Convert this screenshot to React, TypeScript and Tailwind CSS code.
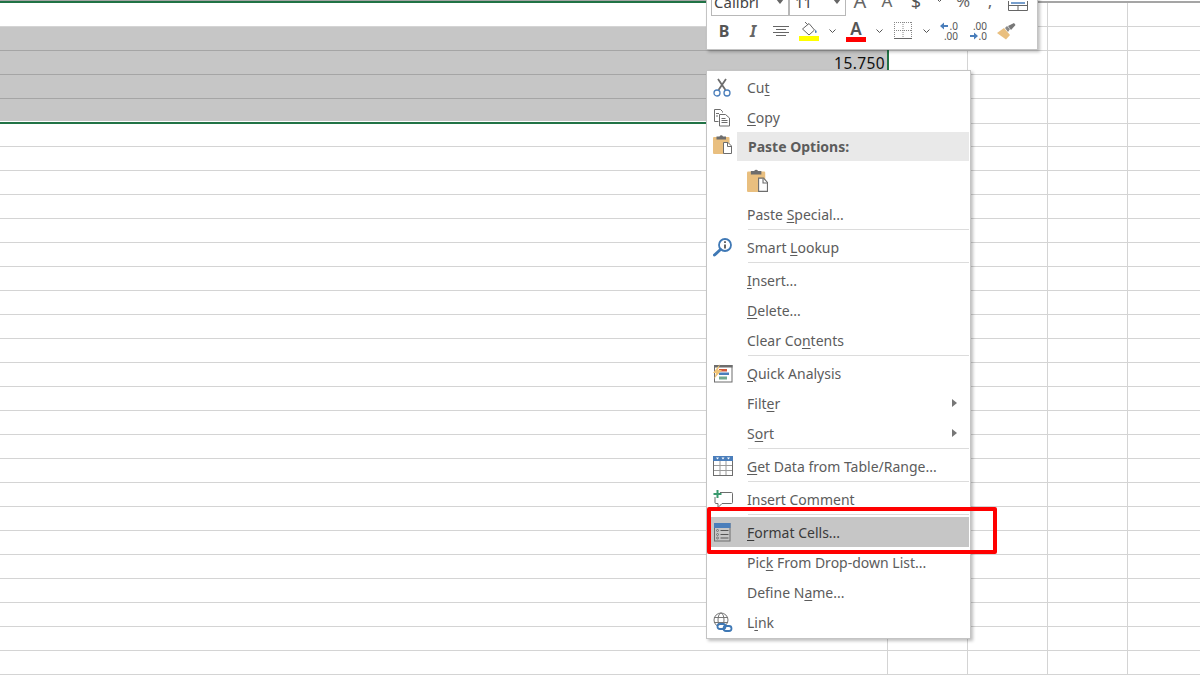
import type { ReactNode } from 'react'

const ui = "font-['Noto_Sans',sans-serif]"

function Scissors() {
  return (
    <svg width="18" height="19" viewBox="0 0 18 19" fill="none">
      <path d="M5 1l7.5 11M13 1L5.5 12" stroke="#6d6d6d" strokeWidth="1.8" />
      <circle cx="4" cy="15" r="3" stroke="#4a7ebb" strokeWidth="1.3" />
      <circle cx="14" cy="15" r="3" stroke="#4a7ebb" strokeWidth="1.3" />
    </svg>
  )
}

function CopyIcon() {
  return (
    <svg width="18" height="19" viewBox="0 0 18 19" fill="none" stroke="#6d6d6d">
      <path d="M9.5 4.5v-1l-2-2h-6v12h4" />
      <path d="M3 5.5h3M3 8h2" />
      <path d="M6.5 6.5h6l4 3.5v8h-10z" fill="#fff" />
      <path d="M8.5 10.5h4M8.5 12.5h6M8.5 14.5h6" />
    </svg>
  )
}

function PasteIcon({ w = 19, h = 20 }: { w?: number; h?: number }) {
  return (
    <svg width={w} height={h} viewBox="0 0 19 20" preserveAspectRatio="none">
      <rect x="0" y="3" width="16.5" height="17" rx="1" fill="#e9bf7f" />
      <path d="M3.500 5.500V2.500H6.500a2 2.200 0 0 1 3.500 0H13V5.500z" fill="#6d6d6d" />
      <path d="M10.500 8.500h4.500l3.500 3.500v7.500h-8z" fill="#fff" stroke="#6d6d6d" />
      <path d="M14.500 9v3.500h4" fill="none" stroke="#6d6d6d" />
    </svg>
  )
}

function LookupIcon() {
  return (
    <svg width="19" height="19" viewBox="0 0 19 19" fill="none">
      <circle cx="12" cy="7" r="6" stroke="#3f78b5" strokeWidth="1.8" fill="#fff" />
      <path d="M7.500 11.500L1.500 17" stroke="#3f78b5" strokeWidth="3" strokeLinecap="round" />
      <path d="M12 6.500v4" stroke="#555" strokeWidth="1.8" />
      <path d="M12 3.200v1.800" stroke="#555" strokeWidth="1.8" />
    </svg>
  )
}

function QuickIcon() {
  return (
    <svg width="20" height="19" viewBox="0 0 20 19">
      <rect x="1.500" y="1.500" width="17.500" height="16.500" fill="#fff" stroke="#6d6d6d" />
      <rect x="1" y="1" width="18.500" height="2.500" fill="#6d6d6d" />
      <rect x="6" y="5" width="8" height="2.500" fill="#d2593a" />
      <rect x="6" y="8.500" width="10" height="2.500" fill="#4a7ebb" />
      <rect x="6" y="12.500" width="8" height="3" fill="#72a98f" />
      <path d="M7 0L0 9h3L1 15l8-9H5z" fill="#f0c477" />
    </svg>
  )
}

function TableIcon() {
  return (
    <svg width="20" height="20" viewBox="0 0 20 20" fill="none">
      <rect x="0.500" y="0.500" width="19" height="19" fill="#fff" stroke="#6d6d6d" />
      <rect x="0" y="0" width="20" height="5" fill="#4a7ebb" />
      <path d="M3 1.500h3L4.500 3.500zM8.500 1.500h3L10 3.500zM14 1.500h3l-1.500 2z" fill="#fff" />
      <path d="M7 5v14M13 5v14M1 9.500h18M1 14.500h18" stroke="#9a9a9a" />
    </svg>
  )
}

function CommentIcon() {
  return (
    <svg width="20" height="19" viewBox="0 0 20 19" fill="none">
      <path d="M7 2.500h11.500a1 1 0 0 1 1 1v9a1 1 0 0 1-1 1H9l-4 4v-4H3a1 1 0 0 1-1-1V7" stroke="#6d6d6d" />
      <path d="M4.500 0v8M0.500 4h8" stroke="#3a9a6e" strokeWidth="2" />
    </svg>
  )
}

function FormatIcon() {
  return (
    <svg width="17" height="19" viewBox="0 0 17 19" fill="none">
      <rect x="0.500" y="0.500" width="15.500" height="17.500" stroke="#6d6d6d" />
      <rect x="0" y="0" width="16.500" height="5" fill="#4a7ebb" />
      <circle cx="3.500" cy="7.500" r="1" stroke="#666" strokeWidth="0.8" />
      <circle cx="3.500" cy="11.500" r="1" stroke="#666" strokeWidth="0.8" />
      <circle cx="3.500" cy="15" r="1" stroke="#666" strokeWidth="0.8" />
      <path d="M6.500 7.500h8M6.500 11.500h8M6.500 15h8" stroke="#555" />
    </svg>
  )
}

function LinkIcon() {
  return (
    <svg width="20" height="20" viewBox="0 0 20 20" fill="none">
      <circle cx="8" cy="8" r="7" stroke="#777" fill="#fff" />
      <ellipse cx="8" cy="8" rx="3" ry="7" stroke="#777" />
      <path d="M1 5.500h14M1 10.500h14" stroke="#777" />
      <rect x="4.500" y="12" width="8" height="5" rx="2.500" stroke="#3f78b5" strokeWidth="1.800" fill="#fff" />
      <rect x="10.500" y="14" width="8" height="5" rx="2.500" stroke="#3f78b5" strokeWidth="1.800" />
    </svg>
  )
}

function Chevron() {
  return (
    <svg width="7" height="5" viewBox="0 0 7 5" fill="none">
      <path d="M0.500 0.500l3 3 3-3" stroke="#555" />
    </svg>
  )
}

type Entry =
  | { sep: true }
  | { label: [string, string, string]; icon?: ReactNode; arrow?: boolean; active?: boolean }

const entries: Entry[] = [
  { label: ['Cu', 't', ''], icon: <Scissors /> },
  { label: ['', 'C', 'opy'], icon: <CopyIcon /> },
]

const afterPaste: Entry[] = [
  { label: ['Paste ', 'S', 'pecial...'] },
  { sep: true },
  { label: ['Smart ', 'L', 'ookup'], icon: <LookupIcon /> },
  { sep: true },
  { label: ['', 'I', 'nsert...'] },
  { label: ['', 'D', 'elete...'] },
  { label: ['Clear Co', 'n', 'tents'] },
  { sep: true },
  { label: ['', 'Q', 'uick Analysis'], icon: <QuickIcon /> },
  { label: ['Filt', 'e', 'r'], arrow: true },
  { label: ['S', 'o', 'rt'], arrow: true },
  { sep: true },
  { label: ['', 'G', 'et Data from Table/Range...'], icon: <TableIcon /> },
  { sep: true },
  { label: ['Insert Co', 'm', 'ment'], icon: <CommentIcon /> },
  { sep: true },
  { label: ['', 'F', 'ormat Cells...'], icon: <div className="pl-px"><FormatIcon /></div>, active: true },
  { label: ['Pic', 'k', ' From Drop-down List...'] },
  { label: ['Define N', 'a', 'me...'] },
  { label: ['L', 'i', 'nk'], icon: <LinkIcon /> },
]

function MenuEntry({ entry }: { entry: Entry }) {
  if ('sep' in entry) {
    return (
      <div className="h-[3px] pl-[41px] pr-[1px]">
        <div className="h-px bg-[#dcdcdc]" />
      </div>
    )
  }
  return (
    <div
      className={`ml-1 mr-px flex h-[30px] items-center ${entry.active ? 'bg-[#c6c6c6] text-[#3a3a3a]' : 'text-[#5c5c5c]'}`}
    >
      <div className="flex w-[36px] shrink-0 pl-[2px]">{entry.icon}</div>
      <span className="whitespace-pre">
        {entry.label[0]}
        <span className="underline underline-offset-2">{entry.label[1]}</span>
        {entry.label[2]}
      </span>
      {entry.arrow && <div className="ml-auto mr-[12px] h-0 w-0 border-y-[4px] border-l-[5px] border-y-transparent border-l-[#777]" />}
    </div>
  )
}

function ContextMenu() {
  return (
    <div className={`absolute left-[706px] top-[70px] w-[265px] border border-[#c4c4c4] bg-white pb-px pt-[1px] text-[14px] shadow-[2px_2px_3px_rgba(0,0,0,0.25)] ${ui}`}>
      {entries.map((e, i) => (
        <MenuEntry key={i} entry={e} />
      ))}
      <div className="relative flex h-[29px]">
        <div className="absolute left-[6px] top-[2px]">
          <PasteIcon />
        </div>
        <div className="ml-[30px] mr-px flex flex-1 items-center bg-[#e9e9e9] pb-px pl-[11px] font-bold text-[#5c5c5c]">Paste Options:</div>
      </div>
      <div className="flex h-[38px] items-center pl-[40px]">
        <PasteIcon w={21} h={24} />
      </div>
      {afterPaste.map((e, i) => (
        <MenuEntry key={i} entry={e} />
      ))}
    </div>
  )
}

function Toolbar() {
  return (
    <div className={`absolute left-[706px] top-[-24px] flex h-[74px] w-[332px] flex-col border border-[#c4c4c4] bg-white text-[#555] shadow-[2px_2px_3px_rgba(0,0,0,0.25)] ${ui}`}>
      <div className="flex h-[39px] pl-[4px]">
        <div className="flex h-[39px] w-[78px] items-end justify-between border border-[#b8b8b8] pb-[3px] pl-[2px] pr-[4px]">
          <span className="text-[15px] leading-[20px] text-[#444]">Calibri</span>
          <div className="mb-[8px] h-0 w-0 border-x-[4px] border-t-[5px] border-x-transparent border-t-[#666]" />
        </div>
        <div className="flex h-[39px] w-[57px] items-end justify-between border border-[#b8b8b8] pb-[3px] pl-[5px] pr-[4px]">
          <span className="text-[15px] leading-[20px] text-[#444]">11</span>
          <div className="mb-[8px] h-0 w-0 border-x-[4px] border-t-[5px] border-x-transparent border-t-[#666]" />
        </div>
        <div className="flex h-[34px] items-end leading-[20px] text-[#666]">
          <span className="w-[28px] text-center text-[20px]">A</span>
          <span className="w-[26px] text-center text-[17px]">A</span>
          <span className="w-[32px] text-center text-[18px] text-[#555]">$</span>
          <span className="mb-[8px] flex h-[5px] w-[14px] items-center justify-center"><Chevron /></span>
          <span className="w-[34px] text-center text-[17px] text-[#666]">%</span>
          <span className="w-[20px] text-center text-[17px]">,</span>
        </div>
        <div className="ml-[8px] mt-[24px]">
          <svg width="20" height="10" viewBox="0 0 20 10" fill="none">
            <path d="M.5 0v9.500h19V0M.5 4.500h19M10 4.500v5" stroke="#666" />
            <path d="M3 2h14" stroke="#4a7ebb" strokeWidth="1.500" />
          </svg>
        </div>
      </div>
      <div className="flex h-[30px] items-center pl-[3px]">
        <span className="w-[28px] text-center text-[16px] font-bold">B</span>
        <span className="w-[30px] text-center text-[16px] font-bold italic text-[#666]">I</span>
        <div className="flex w-[26px] justify-center">
          <svg width="16" height="10" viewBox="0 0 16 10" fill="none">
            <path d="M0 .5h16M3 3.500h10M0 6.500h16M3 9.500h10" stroke="#666" />
          </svg>
        </div>
        <div className="flex w-[30px] justify-center">
          <svg width="20" height="20" viewBox="0 0 20 20" fill="none">
            <path d="M3.500 8L10 2.500 15.500 9 10 14z" stroke="#666" fill="#fff" />
            <path d="M6 1l3 3" stroke="#666" />
            <path d="M16.500 8.500c1.500 2 1.500 3 .5 3.500s-1.500-1-.5-3.500z" fill="#4a7ebb" />
            <rect x="0" y="15" width="20" height="5" fill="#ffff00" />
          </svg>
        </div>
        <div className="flex w-[16px] justify-center"><Chevron /></div>
        <div className="flex w-[32px] flex-col items-center">
          <span className="h-[15px] text-[17px] font-semibold leading-[16px] text-[#555]">A</span>
          <div className="mt-[1px] h-[5px] w-[20px] bg-[#ff0000]" />
        </div>
        <div className="flex w-[14px] justify-center"><Chevron /></div>
        <div className="flex w-[34px] justify-center">
          <svg width="18" height="18" viewBox="0 0 18 18" fill="none">
            <path d="M.5 0v16M9 0v16M17.500 0v16M0 .5h18M0 8.500h18" stroke="#888" strokeDasharray="1 1" />
            <path d="M0 16.500h18" stroke="#666" />
          </svg>
        </div>
        <div className="flex w-[12px] justify-center"><Chevron /></div>
        <div className="flex w-[36px] justify-center">
          <div className="relative h-[20px] w-[16px] text-[10px] leading-[10px]">
            <span className="absolute right-0 top-0">.0</span>
            <span className="absolute right-0 top-[10px]">.00</span>
            <svg className="absolute left-[-2px] top-px" width="8" height="8" viewBox="0 0 8 8">
              <path d="M0 4l4-3.500V3h4v2H4v2.500z" fill="#4a7ebb" />
            </svg>
          </div>
        </div>
        <div className="flex w-[22px] justify-center">
          <div className="relative h-[20px] w-[16px] text-[10px] leading-[10px]">
            <span className="absolute right-0 top-0">.00</span>
            <span className="absolute right-0 top-[10px]">.0</span>
            <svg className="absolute left-[-1px] top-[11px]" width="8" height="8" viewBox="0 0 8 8">
              <path d="M8 4L4 .5V3H0v2h4v2.500z" fill="#4a7ebb" />
            </svg>
          </div>
        </div>
        <div className="flex w-[32px] justify-center">
          <svg width="19" height="17" viewBox="0 0 19 17">
            <path d="M0 10l7-5 6 7-4 4.500z" fill="#e9bf7f" />
            <path d="M8 5l2-2 3 3-2 3z" fill="#888" />
            <path d="M11 3l6-3 1.500 2-4.500 5z" fill="#777" />
          </svg>
        </div>
      </div>
    </div>
  )
}

const rows = Array.from({ length: 28 }, (_, i) => i)

export default function App() {
  return (
    <div className="relative h-[675px] w-[1200px] overflow-hidden bg-white">
      {/* top edge of the selection */}
      <div className="flex h-[3px]">
        <div className="w-[888px] border-t border-[#a5a5a5] bg-[#217346]" />
        <div className="mt-px h-[2px] flex-1 bg-[#a5a5a5]" />
      </div>

      {rows.map((i) => {
        const selected = i >= 1 && i <= 4
        const last = i === 4
        return (
          <div key={i} className={`flex ${last ? 'h-[25px]' : i === 5 ? 'h-[23px]' : 'h-6'}`}>
            <div
              className={`relative flex w-[888px] items-center justify-end ${
                last
                  ? 'border-b-2 border-[#217346] pb-px'
                  : selected
                    ? 'border-b border-[#a5a5a5] bg-[#c6c6c6] pr-[3px]'
                    : 'border-b border-r border-[#d4d4d4]'
              }`}
            >
              {last && <div className="h-full w-full bg-[#c6c6c6]" />}
              {i === 2 && <span className={`pt-[2px] text-[15.5px] leading-none tracking-[0.4px] text-[#111] ${ui}`}>15.750</span>}
              {i === 2 && <div className="absolute right-[-1px] top-[-1px] h-[21px] w-[2px] bg-[#217346]" />}
            </div>
            {[0, 1, 2].map((c) => (
              <div key={c} className="w-20 border-b border-r border-[#d4d4d4]" />
            ))}
            <div className="flex-1 border-b border-[#d4d4d4]" />
          </div>
        )
      })}

      <Toolbar />
      <ContextMenu />

      {/* red annotation box */}
      <div className="absolute left-[707px] top-[507px] h-[47px] w-[290px] rounded-[2px] border-[4px] border-[#ff0000]" />
    </div>
  )
}
